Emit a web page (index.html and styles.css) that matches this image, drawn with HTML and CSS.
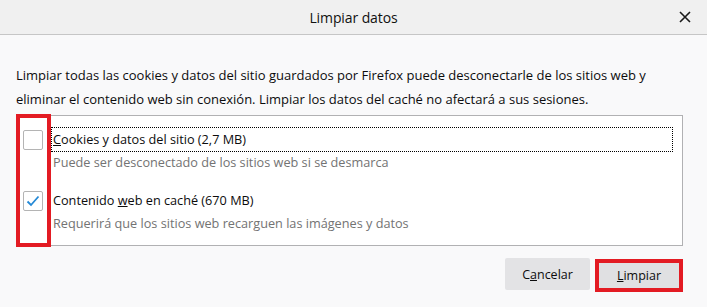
FILE: index.html
```html
<!DOCTYPE html>
<html lang="es">
<head>
<meta charset="utf-8">
<title>Limpiar datos</title>
<link rel="stylesheet" href="styles.css">
</head>
<body>
<div class="dialog">
  <header class="titlebar">
    <span class="title">Limpiar datos</span>
    <span class="close" aria-label="Cerrar">
      <svg width="12" height="12" viewBox="0 0 12 12"><path d="M1 1 L11 11 M11 1 L1 11" stroke="#1a1a1a" stroke-width="1.6" fill="none"/></svg>
    </span>
  </header>
  <main class="content">
    <p class="intro">Limpiar todas las cookies y datos del sitio guardados por Firefox puede desconectarle de los sitios web y<br>eliminar el contenido web sin conexión. Limpiar los datos del caché no afectará a sus sesiones.</p>
    <div class="listbox">
      <div class="item">
        <span class="check"></span>
        <span class="label focused"><u>C</u>ookies y datos del sitio (2,7 MB)</span>
        <span class="desc">Puede ser desconectado de los sitios web si se desmarca</span>
      </div>
      <div class="item second">
        <span class="check checked"><svg width="14" height="12" viewBox="0 0 14 12"><path d="M1.5 6.5 L5 10 L12.5 1.5" stroke="#2489d6" stroke-width="1.8" fill="none"/></svg></span>
        <span class="label">Contenido <u>w</u>eb en caché (670 MB)</span>
        <span class="desc">Requerirá que los sitios web recarguen las imágenes y datos</span>
      </div>
      <div class="marker"></div>
    </div>
    <div class="buttons">
      <button class="btn">C<u>a</u>ncelar</button>
      <button class="btn primary"><u>L</u>impiar</button>
    </div>
  </main>
</div>
</body>
</html>
```

FILE: styles.css
```css
html, body {
  margin: 0;
  padding: 0;
}
body {
  background: #f9f9fa;
  font-family: "Open Sans", "Noto Sans", sans-serif;
  color: #0c0c0d;
  width: 707px;
  height: 307px;
  overflow: hidden;
}
.dialog {
  display: flex;
  flex-direction: column;
}
.titlebar {
  height: 34px;
  background: #f0f0f0;
  border-bottom: 1px solid #c6c6c6;
  display: flex;
  align-items: center;
  justify-content: center;
  position: relative;
}
.title {
  font-size: 14px;
  color: #111;
  letter-spacing: -0.1px;
}
.close {
  position: absolute;
  right: 16px;
  top: 11px;
  width: 12px;
  height: 12px;
  display: flex;
}
.content {
  padding: 0 24px 0 16px;
}
.intro {
  margin: 28px 0 0;
  font-size: 13px;
  line-height: 24px;
  white-space: nowrap;
}
.listbox {
  margin-top: 4px;
  height: 131px;
  background: #fff;
  border: 1px solid #b1b1b3;
  position: relative;
  padding: 11px 9px 0 6px;
  box-sizing: border-box;
}
.item {
  display: grid;
  grid-template-columns: 20px 1fr;
  column-gap: 8px;
  align-items: center;
}
.item.second {
  margin-top: 16px;
}
.check {
  width: 18px;
  height: 18px;
  border: 1px solid #b4b4b4;
  border-radius: 2px;
  background: #fff;
  display: flex;
  align-items: center;
  justify-content: center;
}
.label {
  font-size: 12.7px;
  line-height: 23px;
  border: 1px dotted transparent;
  padding-left: 1px;
}
.label.focused {
  border-color: #000;
}
.desc {
  grid-column: 2;
  font-size: 12.7px;
  line-height: 20px;
  color: #737373;
  padding-left: 2px;
}
.marker {
  position: absolute;
  left: -1px;
  top: -2px;
  width: 27px;
  height: 125px;
  border: 4px solid #e31b23;
}
.buttons {
  display: flex;
  justify-content: flex-end;
  gap: 5px;
  margin-top: 12px;
  align-items: flex-start;
}
.btn {
  font-family: inherit;
  font-size: 12.5px;
  color: #0c0c0d;
  background: #e3e3e5;
  border: none;
  border-radius: 2px;
  width: 85px;
  height: 32px;
  padding: 0;
}
.btn.primary {
  width: 88px;
  height: 33px;
  margin-top: 1px;
  background: #e0e0e2;
  box-shadow: inset 0 0 0 4px #e31b23;
  border-radius: 0;
}
```
